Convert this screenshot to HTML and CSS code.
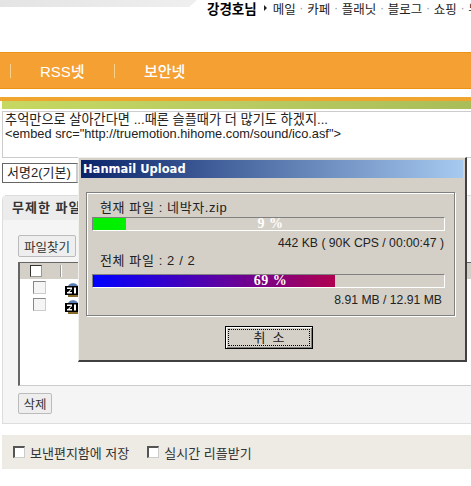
FILE: index.html
```html
<!DOCTYPE html>
<html lang="ko">
<head>
    <meta charset="UTF-8">
    <meta name="viewport" content="width=device-width, initial-scale=1.0">
    <title>Hanmail Upload</title>
    <link rel="stylesheet" href="styles.css">
</head>
<body>
    <div class="page">
        <div class="top">
            <div class="top-strip"></div>
            <div class="top-nav">
                <b>강경호님</b>
                <span class="arrow"></span>
                <a>메일</a><i>·</i><a>카페</a><i>·</i><a>플래닛</a><i>·</i><a>블로그</a><i>·</i><a>쇼핑</a><i>·</i><a>뉴스</a>
            </div>
        </div>

        <div class="menu">
            <span class="menu-sep"></span>
            <a>RSS넷</a>
            <span class="menu-sep"></span>
            <a>보안넷</a>
        </div>

        <div class="orange-line"></div>
        <div class="green-line"></div>

        <div class="compose">
            <p>추억만으로 살아간다면 ...때론 슬플때가 더 많기도 하겠지...</p>
            <p class="compose-src">&lt;embed src="http://truemotion.hihome.com/sound/ico.asf"&gt;</p>
        </div>

        <div class="sign-select">서명2(기본)</div>

        <div class="attach">
            <div class="attach-head">무제한 파일 첨부</div>
            <div class="attach-body">
                <button class="btn">파일찾기</button>
                <div class="file-list">
                    <div class="file-head">
                        <span class="check check-white"></span>
                        <span class="file-head-sep"></span>
                    </div>
                    <div class="file-row">
                        <span class="check"></span>
                        <svg class="zip" width="16" height="17" viewBox="0 0 16 17">
                            <path d="M3 6 C3 1 13 1 13 6 Z" fill="#5a7fb5"/>
                            <rect x="0" y="5" width="16" height="9" fill="#000"/>
                            <rect x="2" y="6.500" width="5" height="1.500" fill="#fff"/>
                            <rect x="2" y="11" width="5" height="1.500" fill="#fff"/>
                            <path d="M6 8 L3 11 L4.500 11 L7 8 Z" fill="#fff"/>
                            <rect x="9" y="6.500" width="2" height="6" fill="#fff"/>
                            <rect x="13" y="6.500" width="2" height="6" fill="#fff"/>
                            <rect x="3" y="14" width="10" height="2" fill="#8a6d2a"/>
                        </svg>
                    </div>
                    <div class="file-row">
                        <span class="check"></span>
                        <svg class="zip" width="16" height="17" viewBox="0 0 16 17">
                            <path d="M3 6 C3 1 13 1 13 6 Z" fill="#5a7fb5"/>
                            <rect x="0" y="5" width="16" height="9" fill="#000"/>
                            <rect x="2" y="6.500" width="5" height="1.500" fill="#fff"/>
                            <rect x="2" y="11" width="5" height="1.500" fill="#fff"/>
                            <path d="M6 8 L3 11 L4.500 11 L7 8 Z" fill="#fff"/>
                            <rect x="9" y="6.500" width="2" height="6" fill="#fff"/>
                            <rect x="13" y="6.500" width="2" height="6" fill="#fff"/>
                            <rect x="3" y="14" width="10" height="2" fill="#8a6d2a"/>
                        </svg>
                    </div>
                </div>
                <button class="btn btn-del">삭제</button>
            </div>
        </div>

        <div class="options">
            <span class="check check-sunken"></span>
            <label>보낸편지함에 저장</label>
            <span class="check check-sunken check-second"></span>
            <label>실시간 리플받기</label>
        </div>

        <div class="upload">
            <div class="upload-title">Hanmail Upload</div>
            <div class="upload-panel">
                <div class="upload-label">현재 파일 : 네박자.zip</div>
                <div class="bar">
                    <div class="bar-fill bar-green" style="width: 9.4%"></div>
                    <span class="bar-text">9 %</span>
                </div>
                <div class="upload-info">442 KB ( 90K CPS / 00:00:47 )</div>
                <div class="upload-label">전체 파일 : 2 / 2</div>
                <div class="bar bar-total">
                    <div class="bar-fill bar-grad" style="width: 69%"></div>
                    <span class="bar-text">69 %</span>
                </div>
                <div class="upload-info upload-info-total">8.91 MB / 12.91 MB</div>
            </div>
            <div class="upload-foot">
                <button class="cancel"><span>취 &nbsp;소</span></button>
            </div>
        </div>
    </div>
</body>
</html>
```

FILE: styles.css
```css
* {
    box-sizing: border-box;
}
body {
    margin: 0;
    background: #fff;
    color: #222;
    font-family: "Liberation Sans", "Noto Sans CJK KR", sans-serif;
    font-size: 12px;
}
p {
    margin: 0;
}
.page {
    position: relative;
    width: 471px;
    height: 486px;
    overflow: hidden;
}

/* top */
.top {
    display: flex;
    height: 52px;
}
.top-strip {
    flex: none;
    width: 197px;
    height: 7px;
    background: linear-gradient(to right, #e4e4e4, #efefef);
    clip-path: polygon(0 0, 100% 0, 96% 100%, 0 100%);
}
.top-nav {
    display: flex;
    flex: none;
    align-items: center;
    height: 16px;
    margin-left: 10px;
    color: #222;
    font-size: 12.500px;
    white-space: nowrap;
}
.top-nav b {
    color: #000;
    font-size: 13.500px;
}
.top-nav i {
    width: 11.500px;
    color: #999;
    font-style: normal;
    text-align: center;
}
.arrow {
    width: 0;
    height: 0;
    margin: 0 6px 0 7px;
    border-top: 3px solid transparent;
    border-bottom: 3px solid transparent;
    border-left: 3px solid #222;
}

/* orange menu */
.menu {
    display: flex;
    align-items: center;
    height: 37px;
    padding-left: 10px;
    background: #f4a032;
    border-top: 1px solid #ec9216;
    border-bottom: 1px solid #ec9216;
    color: #fff;
    font-size: 15px;
    font-weight: 500;
}
.menu-sep {
    width: 1px;
    height: 14px;
    background: #f9d08c;
}
.menu a {
    width: 103px;
    padding-left: 29px;
}
.orange-line {
    height: 4px;
    margin-top: 8px;
    background: #f0a52e;
}
.green-line {
    height: 8px;
    margin-left: 2px;
    background: linear-gradient(to right, #c6d860, #b9cb62 50%, #a9bd58);
}

/* compose */
.compose {
    height: 47px;
    margin: 2px 0 0 2px;
    padding: 1px 2px;
    border: 1px solid #ccc;
    border-right: 0;
    font-size: 13.200px;
    line-height: 14px;
    white-space: nowrap;
}
.compose-src {
    font-size: 12.800px;
}
.sign-select {
    width: 77px;
    height: 20px;
    margin: 5px 0 0 2px;
    padding-left: 4px;
    border: 1px solid #666;
    border-right: 3px solid #ccc;
    font-size: 13px;
    line-height: 18px;
    white-space: nowrap;
}

/* attach box */
.attach {
    height: 229px;
    margin: 12px 0 0 2px;
    background: #f5f5f5;
    border: 1px solid #ddd;
    border-right: 0;
    border-radius: 5px 0 0 0;
}
.attach-head {
    width: 400px;
    height: 24px;
    padding-left: 9px;
    background: #ececec;
    color: #333;
    font-size: 13px;
    font-weight: bold;
    letter-spacing: 1px;
    line-height: 24px;
}
.attach-body {
    padding: 15px 0 0 15px;
}
.btn {
    display: block;
    width: 58px;
    height: 22px;
    padding: 0;
    background: #eee;
    border: 1px solid #bbb;
    border-radius: 2px;
    color: #333;
    font-family: inherit;
    font-size: 12.500px;
}
.btn-del {
    width: 34px;
    height: 21px;
    margin-top: 7px;
}
.file-list {
    height: 124px;
    margin-top: 5px;
    background: #fff;
    border-top: 1px solid #666;
    border-left: 2px solid #666;
    border-bottom: 1px solid #ccc;
}
.file-head {
    display: flex;
    align-items: center;
    height: 16px;
    padding-left: 10px;
    background: #d4d0c8;
}
.file-head-sep {
    width: 1px;
    height: 12px;
    margin-left: 19px;
    background: #fff;
    box-shadow: -1px 0 0 #999;
}
.file-row {
    display: flex;
    align-items: flex-start;
    height: 17px;
    padding: 2px 0 0 13px;
}
.file-row .check {
    width: 13px;
    height: 13px;
}
.zip {
    flex: none;
    margin-left: 19px;
}
.check {
    display: block;
    flex: none;
    width: 12px;
    height: 12px;
    background: #f5f5f5;
    border: 1px solid #888;
    border-right-color: #ccc;
    border-bottom-color: #ccc;
}
.check-white {
    background: #fff;
    border: 1px solid #333;
    border-right-color: #999;
    border-bottom-color: #999;
}
.check-sunken {
    background: #fff;
    border-top: 2px solid #555;
    border-left: 2px solid #555;
}

/* bottom options */
.options {
    display: flex;
    align-items: center;
    height: 34px;
    margin: 11px 0 0 2px;
    padding-left: 11px;
    background: #eeebe4;
    color: #333;
    font-size: 13px;
}
.options label {
    margin-left: 5px;
}
.check-second {
    margin-left: 18px;
}

/* upload dialog */
.upload {
    position: absolute;
    top: 157px;
    left: 78px;
    width: 389px;
    height: 205px;
    padding: 2px 2px 0 2px;
    background: #d4d0c8;
    border: 1px solid #f2f0ec;
    border-right: 2px solid #404040;
    border-bottom: 2px solid #404040;
}
.upload-title {
    height: 18px;
    padding-left: 2px;
    background: linear-gradient(to right, #0a246a, #a6caf0);
    color: #fff;
    font-family: "DejaVu Sans", sans-serif;
    font-size: 11.500px;
    font-weight: bold;
    line-height: 18px;
}
.upload-panel {
    width: 369px;
    height: 124px;
    margin: 14px 0 0 5px;
    padding: 5px 9px 0 5px;
    border: 1px solid #808080;
    box-shadow: 1px 1px 0 #fff, inset 1px 1px 0 #fff;
}
.upload-label {
    height: 19px;
    padding-left: 8px;
    color: #222;
    font-size: 13px;
    letter-spacing: 0.600px;
    line-height: 19px;
}
.bar {
    position: relative;
    height: 14px;
    border-top: 1px solid #808080;
    border-left: 1px solid #808080;
    border-right: 1px solid #fff;
    border-bottom: 1px solid #fff;
}
.bar-total {
    margin-top: 4px;
}
.bar-fill {
    height: 100%;
}
.bar-green {
    background: #00f000;
}
.bar-grad {
    background: linear-gradient(to right, #0000ff, #b00050);
}
.bar-text {
    position: absolute;
    top: -2px;
    left: 0;
    right: 0;
    padding-left: 4px;
    color: #fff;
    font-family: "Liberation Serif", serif;
    font-size: 14px;
    font-weight: bold;
    letter-spacing: 0.500px;
    line-height: 16px;
    text-align: center;
}
.upload-info {
    height: 20px;
    padding-right: 1px;
    color: #222;
    font-size: 12.200px;
    line-height: 24px;
    text-align: right;
    white-space: nowrap;
}
.upload-info-total {
    padding-right: 3px;
}
.upload-foot {
    display: flex;
    justify-content: center;
    margin: 10px 6px 0 0;
}
.cancel {
    width: 88px;
    height: 23px;
    padding: 2px;
    background: #d4d0c8;
    border: 1px solid #000;
    box-shadow: inset 1px 1px 0 #fff, inset -1px -1px 0 #808080;
    font-family: inherit;
    font-size: 13px;
}
.cancel span {
    display: block;
    height: 17px;
    border: 1px dotted #000;
    color: #222;
    line-height: 15px;
}
```
